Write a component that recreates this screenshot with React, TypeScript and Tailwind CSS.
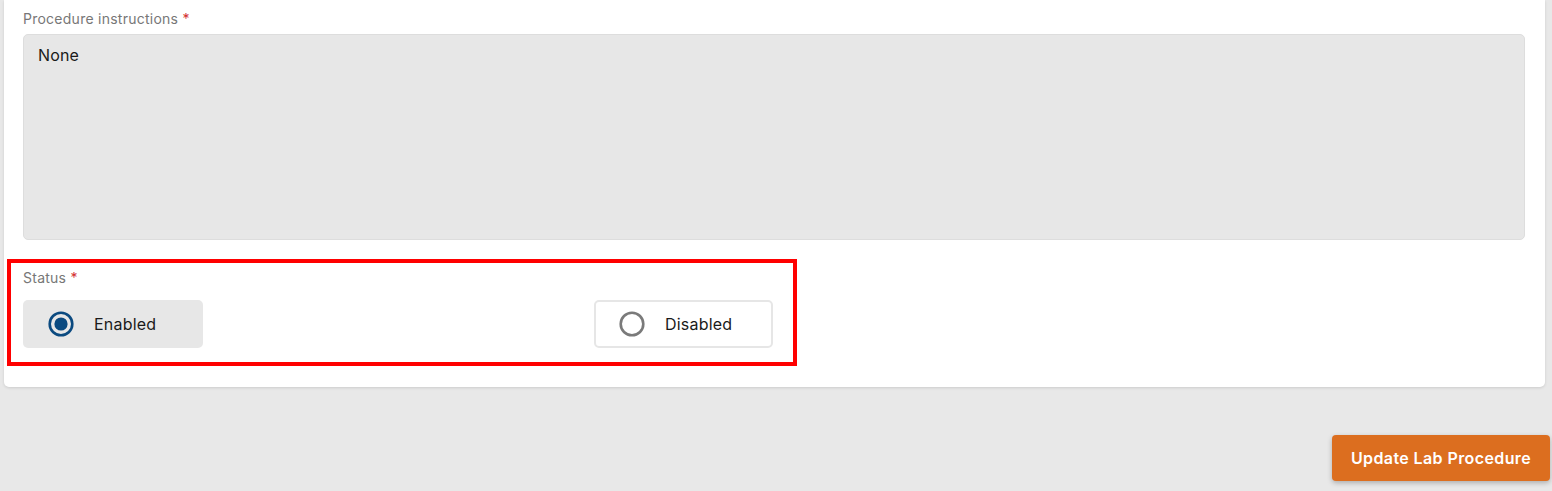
import React from "react";

function Radio({ checked }: { checked: boolean }) {
  return (
    <svg width="26" height="26" viewBox="0 0 26 26" className="shrink-0">
      <circle cx="13" cy="13" r="11.3" fill="none" stroke={checked ? "#0b4a80" : "#7a7a7a"} strokeWidth="2.6" />
      {checked && <circle cx="13" cy="13" r="6.6" fill="#0b4a80" />}
    </svg>
  );
}

export default function App() {
  return (
    <div className="min-h-screen bg-[#e8e8e8] pl-[4px] pr-[2px] pb-[10px] font-['Inter',sans-serif]">
      <div className="mr-[5px] bg-white rounded-b-[5px] shadow-[0_1px_3px_rgba(0,0,0,0.12)] pl-[3px] pr-[20px] pt-[11px] pb-[21px]">
        <div className="ml-[16px]">
          <div className="text-[14px] leading-[16px] tracking-[0.25px] text-[#777777]">
            Procedure instructions <span className="text-[#d32f2f]">*</span>
          </div>
          <div className="mt-[7px] h-[206px] rounded-[5px] bg-[#e7e7e7] border border-[#dddddd] px-[14px] pt-[10px] text-[16px] leading-[20px] tracking-[0.15px] text-[#1a1a1a]">
            None
          </div>
        </div>
        <div className="mt-[19px] w-[790px] border-4 border-[#ff0000] pl-[12px] pr-[20px] pt-[7px] pb-[14px]">
          <div className="text-[14px] leading-[16px] tracking-[0.25px] text-[#777777]">
            Status <span className="text-[#d32f2f]">*</span>
          </div>
          <div className="mt-[14px] flex justify-between">
            <div className="w-[180px] h-[48px] rounded-[5px] bg-[#e7e7e7] flex items-center pl-[25px] gap-[20px]">
              <Radio checked />
              <span className="text-[16px] tracking-[0.2px] text-[#1a1a1a]">Enabled</span>
            </div>
            <div className="w-[179px] h-[48px] rounded-[5px] bg-white border-2 border-[#e6e6e6] flex items-center pl-[23px] gap-[20px]">
              <Radio checked={false} />
              <span className="text-[16px] tracking-[0.2px] text-[#1a1a1a]">Disabled</span>
            </div>
          </div>
        </div>
      </div>
      <div className="mt-[48px] flex justify-end">
        <button className="w-[218px] h-[46px] rounded-[4px] bg-[#dc6e1f] text-white text-[16px] font-semibold tracking-[0.4px] shadow-[0_2px_5px_rgba(0,0,0,0.25)]">
          Update Lab Procedure
        </button>
      </div>
    </div>
  );
}
